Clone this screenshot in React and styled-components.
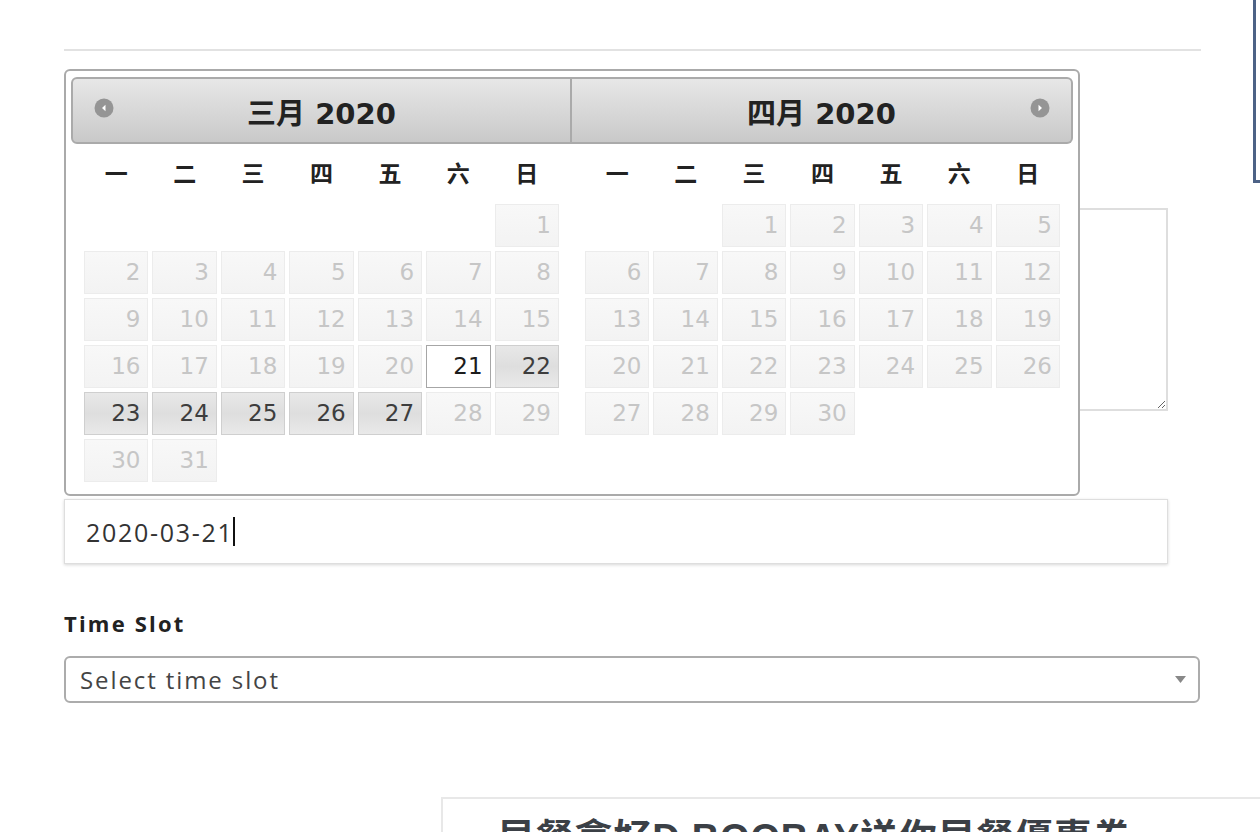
import React from "react";
import styled, { createGlobalStyle, css } from "styled-components";

const GlobalStyle = createGlobalStyle`
  html, body {
    margin: 0;
    background: #fff;
  }
  body {
    font-family: "DejaVu Sans", "Noto Sans CJK SC", sans-serif;
  }
`;

const Page = styled.div`
  position: relative;
  width: 1260px;
  height: 832px;
  overflow: hidden;
  box-sizing: border-box;
  padding-left: 64px;
`;

const TopRule = styled.div`
  margin-top: 49px;
  width: 1137px;
  height: 2px;
  background: #e2e2e2;
`;

const NoteField = styled.textarea`
  display: block;
  box-sizing: border-box;
  margin-top: 157px;
  width: 1104px;
  height: 203px;
  border: 2px solid #dedede;
  resize: both;
  outline: none;
`;

const DateWrap = styled.div`
  position: relative;
  margin-top: 88px;
  width: 1104px;
`;

const DateField = styled.div`
  display: flex;
  align-items: center;
  box-sizing: border-box;
  height: 65px;
  padding-left: 21px;
  border: 1px solid #dedede;
  box-shadow: 0 1px 3px rgba(0, 0, 0, 0.16);
  font-family: "Open Sans", Lato, sans-serif;
  font-size: 25px;
  letter-spacing: 1.7px;
  color: #333;
`;

const Caret = styled.span`
  display: inline-block;
  width: 2px;
  height: 29px;
  background: #111;
`;

const FieldLabel = styled.div`
  margin-top: 46px;
  font-family: "Open Sans", Lato, sans-serif;
  font-weight: 700;
  font-size: 22px;
  letter-spacing: 2.2px;
  line-height: 26px;
  color: #222;
`;

const SelectBox = styled.div`
  display: flex;
  align-items: center;
  justify-content: space-between;
  box-sizing: border-box;
  margin-top: 20px;
  width: 1136px;
  height: 47px;
  padding: 0 12px 0 14px;
  border: 2px solid #acacac;
  border-radius: 6px;
  font-family: "Open Sans", Lato, sans-serif;
  font-size: 24px;
  letter-spacing: 1.9px;
  color: #444;
`;

const PromoCard = styled.div`
  margin-top: 94px;
  margin-left: 377px;
  width: 900px;
  height: 120px;
  box-sizing: border-box;
  padding: 20px 0 0 54px;
  border-top: 2px solid #e8e8e8;
  border-left: 2px solid #e8e8e8;
  font-family: "Liberation Sans", "Noto Sans CJK TC", sans-serif;
  font-weight: 700;
  font-size: 38px;
  letter-spacing: 0.8px;
  line-height: 1;
  color: #3b4046;
  white-space: nowrap;
`;

const SideWidget = styled.div`
  position: absolute;
  left: 1253px;
  top: -20px;
  width: 60px;
  height: 200px;
  border-left: 3px solid #4d6286;
  border-bottom: 3px solid #4d6286;
`;

/* datepicker popup */

const Picker = styled.div`
  position: absolute;
  left: 0;
  bottom: calc(100% + 3px);
  width: 1016px;
  box-sizing: border-box;
  display: flex;
  padding: 6px 5px;
  border: 2px solid #aaa;
  border-radius: 6px;
  background: #fff;
  z-index: 2;
`;

const Group = styled.div`
  flex: 1;
  min-width: 0;
`;

const Header = styled.div`
  position: relative;
  display: flex;
  align-items: center;
  justify-content: center;
  box-sizing: border-box;
  height: 67px;
  border: 2px solid #aaa;
  background: linear-gradient(#e7e7e7, #c9c9c9);
  ${(p) =>
    p.$side === "left"
      ? css`
          border-radius: 6px 0 0 6px;
        `
      : css`
          border-left: 0;
          border-radius: 0 6px 6px 0;
        `}
`;

const Title = styled.div`
  font-size: 29px;
  font-weight: 700;
  color: #222;
`;

const NavIcon = styled.svg`
  position: absolute;
  top: 19px;
  width: 20px;
  height: 20px;
  ${(p) => (p.$dir === "prev" ? "left: 21px;" : "right: 21px;")}
`;

const DayNames = styled.div`
  display: grid;
  grid-template-columns: repeat(7, 1fr);
  column-gap: 4px;
  height: 48px;
  margin-top: 4px;
  padding: 0 13px;
  align-items: center;
  font-family: "Noto Sans CJK SC", sans-serif;
  font-weight: 700;
  font-size: 23px;
  color: #222;
  text-align: center;
`;

const Days = styled.div`
  display: grid;
  grid-template-columns: repeat(7, 1fr);
  grid-auto-rows: 43px;
  gap: 4px;
  margin: 8px 0 6px;
  padding: 0 13px;
`;

const cellStates = {
  off: css`
    border-color: #ececec;
    background: linear-gradient(#f8f8f8, #f3f3f3);
    color: #c6c6c6;
  `,
  on: css`
    border-color: #cfcfcf;
    background: linear-gradient(#e8e8e8 0%, #dedede 50%, #e9e9e9 100%);
    color: #3d3d3d;
  `,
  active: css`
    border-color: #a6a6a6;
    background: #fff;
    color: #1c1c1c;
  `,
};

const Cell = styled.div`
  box-sizing: border-box;
  border: 1px solid;
  padding-right: 7px;
  text-align: right;
  font-size: 23px;
  line-height: 41px;
  ${(p) => cellStates[p.$state]}
  ${(p) => p.$start && `grid-column-start: ${p.$start};`}
`;

const weekdays = ["一", "二", "三", "四", "五", "六", "日"];

const months = [
  {
    label: "三月",
    offset: 7,
    count: 31,
    stateOf: (d) => (d === 21 ? "active" : d >= 22 && d <= 27 ? "on" : "off"),
  },
  { label: "四月", offset: 3, count: 30, stateOf: () => "off" },
];

const Arrow = ({ dir }) => (
  <NavIcon $dir={dir} viewBox="0 0 20 20">
    <circle cx="10" cy="10" r="9.5" fill="#959595" />
    {dir === "prev" ? (
      <path d="M11.5 6.8 L8 10 L11.5 13.2 Z" fill="#fff" />
    ) : (
      <path d="M8.5 6.8 L12 10 L8.5 13.2 Z" fill="#fff" />
    )}
  </NavIcon>
);

const Month = ({ month, side }) => {
  const days = Array.from({ length: month.count }, (_, i) => i + 1);
  return (
    <Group>
      <Header $side={side}>
        {side === "left" && <Arrow dir="prev" />}
        <Title>{month.label} 2020</Title>
        {side === "right" && <Arrow dir="next" />}
      </Header>
      <DayNames>
        {weekdays.map((w) => (
          <span key={w}>{w}</span>
        ))}
      </DayNames>
      <Days>
        {days.map((d) => (
          <Cell key={d} $state={month.stateOf(d)} $start={d === 1 ? month.offset : null}>
            {d}
          </Cell>
        ))}
      </Days>
    </Group>
  );
};

export default function App() {
  return (
    <Page>
      <GlobalStyle />
      <SideWidget />
      <TopRule />
      <NoteField />
      <DateWrap>
        <Picker>
          <Month month={months[0]} side="left" />
          <Month month={months[1]} side="right" />
        </Picker>
        <DateField>
          2020-03-21
          <Caret />
        </DateField>
      </DateWrap>
      <FieldLabel>Time Slot</FieldLabel>
      <SelectBox>
        <span>Select time slot</span>
        <svg width="11" height="7" viewBox="0 0 11 7">
          <path d="M0 0 H11 L5.5 7 Z" fill="#888" />
        </svg>
      </SelectBox>
      <PromoCard>早餐拿好D.BOOBAY送你早餐優惠卷</PromoCard>
    </Page>
  );
}
